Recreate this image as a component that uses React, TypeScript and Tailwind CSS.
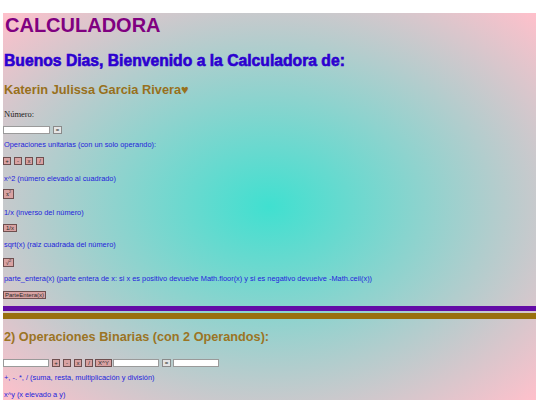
import React from "react";

const sans = "font-['Liberation_Sans',Arial,sans-serif]";

function Btn({ children, cls, grey }: { children: React.ReactNode; cls: string; grey?: boolean }) {
  return (
    <div
      className={`${cls} h-[8px] shrink-0 border ${
        grey ? "border-[#8a8a8a] bg-[#e4e4e4]" : "border-[#6e4f4f] bg-[#d9a2a2]"
      } flex items-center justify-center text-[6px] leading-none text-[#2a2a2a] ${sans}`}
    >
      {children}
    </div>
  );
}

function Input({ cls }: { cls: string }) {
  return <div className={`${cls} h-[8px] shrink-0 border border-[#9a9a9a] bg-white`} />;
}

function P({ children, mt }: { children: React.ReactNode; mt: string }) {
  return (
    <div className={`${mt} h-[10px] leading-[10px] text-[7.4px] text-[#2323dc] pl-[1px] whitespace-nowrap ${sans}`}>
      {children}
    </div>
  );
}

export default function App() {
  return (
    <div className="w-[540px] h-[405px] bg-white pt-[13px] pl-[3px] pr-[4px] overflow-hidden">
      <div className="h-[387px] overflow-hidden bg-[radial-gradient(ellipse_at_center,#40e0d0,#ffc0cb)]">
        <div className={`mt-[2px] h-[20px] leading-[20px] text-[20px] font-bold text-[#800080] pl-[2px] ${sans}`}>
          CALCULADORA
        </div>
        <div
          className={`mt-[16px] h-[20px] leading-[20px] text-[15.7px] font-bold text-[#2c00d0] pl-[1px] whitespace-nowrap [-webkit-text-stroke:0.6px_#2c00d0] ${sans}`}
        >
          Buenos Dias, Bienvenido a la Calculadora de:
        </div>
        <div className={`mt-[11px] h-[16px] leading-[16px] text-[12.8px] font-bold text-[#98701c] pl-[1px] ${sans}`}>
          Katerin Julissa Garcia Rivera♥
        </div>
        <div className="mt-[11px] h-[10px] leading-[10px] text-[8.5px] text-[#222] pl-[1px] font-['Liberation_Serif',serif]">
          Número:
        </div>
        <div className="mt-[7px] flex items-center">
          <Input cls="w-[47px]" />
          <Btn cls="w-[9px] ml-[3px]" grey>=</Btn>
        </div>
        <P mt="mt-[6px]">Operaciones unitarias (con un solo operando):</P>
        <div className="mt-[7px] flex items-center gap-[3px]">
          <Btn cls="w-[8px]">+</Btn>
          <Btn cls="w-[8px]">-</Btn>
          <Btn cls="w-[8px]">x</Btn>
          <Btn cls="w-[8px]">/</Btn>
        </div>
        <P mt="mt-[9px]">x^2 (número elevado al cuadrado)</P>
        <div className="mt-[5px] flex">
          <div className="w-[11px] h-[10px] border border-[#6e4f4f] bg-[#d9a2a2] flex items-center justify-center leading-none text-[#2a2a2a] font-['Liberation_Serif',serif]">
            <span className="text-[6px]">x</span>
            <span className="text-[4px] relative -top-[2px]">2</span>
          </div>
        </div>
        <P mt="mt-[9px]">1/x (inverso del número)</P>
        <div className="mt-[6px] flex">
          <Btn cls="w-[14px]">1/x</Btn>
        </div>
        <P mt="mt-[8px]">sqrt(x) (raiz cuadrada del número)</P>
        <div className="mt-[8px] flex">
          <div className={`w-[11px] h-[9px] border border-[#6e4f4f] bg-[#d9a2a2] flex items-center justify-center leading-none text-[#2a2a2a] ${sans}`}>
            <span className="text-[6px]">√</span>
            <span className="text-[4px] relative -top-[2px]">2</span>
          </div>
        </div>
        <P mt="mt-[7px]">
          parte_entera(x) (parte entera de x: si x es positivo devuelve Math.floor(x) y si es negativo devuelve -Math.ceil(x))
        </P>
        <div className="mt-[7px] flex">
          <Btn cls="w-[43px]">ParteEntera(x)</Btn>
        </div>
        <div className="mt-[7px] h-[5px] bg-[#630ca6]" />
        <div className="mt-[2px] h-[6px] bg-[#99700f]" />
        <div className={`mt-[10px] h-[16px] leading-[16px] text-[12.7px] font-bold text-[#9b7424] pl-[1px] whitespace-nowrap ${sans}`}>
          2) Operaciones Binarias (con 2 Operandos):
        </div>
        <div className="mt-[14px] flex items-center">
          <Input cls="w-[46px]" />
          <Btn cls="w-[8px] ml-[3px]">+</Btn>
          <Btn cls="w-[8px] ml-[3px]">-</Btn>
          <Btn cls="w-[8px] ml-[3px]">x</Btn>
          <Btn cls="w-[8px] ml-[3px]">/</Btn>
          <Btn cls="w-[17px] ml-[2px]">X^Y</Btn>
          <Input cls="w-[46px] ml-[1px]" />
          <Btn cls="w-[9px] ml-[3px]" grey>=</Btn>
          <Input cls="w-[46px] ml-[2px]" />
        </div>
        <P mt="mt-[6px]">+, -. *, / (suma, resta, multiplicación y división)</P>
        <P mt="mt-[7px]">x^y (x elevado a y)</P>
      </div>
    </div>
  );
}
